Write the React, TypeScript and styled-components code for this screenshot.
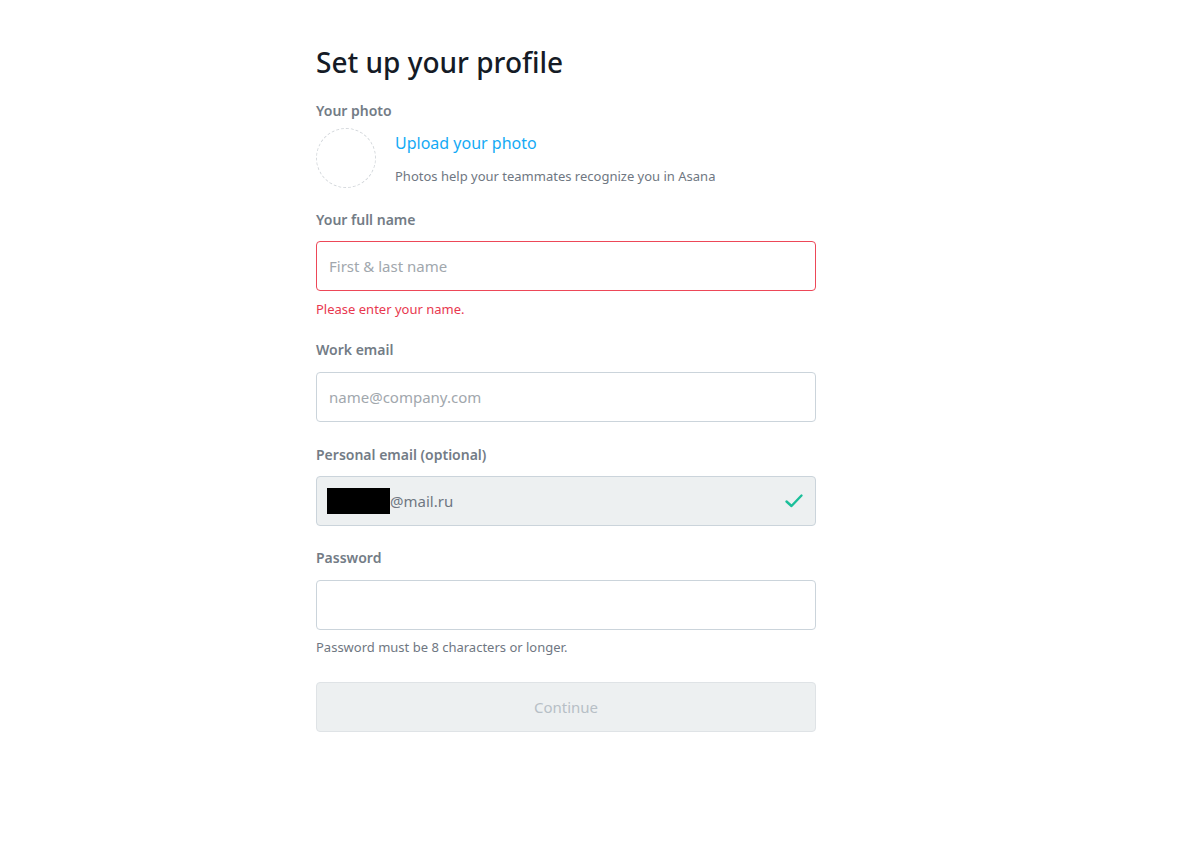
import React from "react";
import styled, { createGlobalStyle } from "styled-components";

const Global = createGlobalStyle`
  html, body { margin: 0; padding: 0; background: #fff; }
  body { font-family: "Noto Sans", "Open Sans", sans-serif; -webkit-font-smoothing: antialiased; }
  * { box-sizing: border-box; }
`;

const Page = styled.div`
  display: flex;
  justify-content: flex-start;
  padding: 40px 0 0 316px;
`;

const Form = styled.div`
  width: 500px;
  display: flex;
  flex-direction: column;
`;

const Title = styled.h1`
  margin: 0 0 17px;
  font-size: 28px;
  font-weight: 500;
  line-height: 44px;
  color: #151b26;
`;

const Label = styled.div<{ gap?: number }>`
  font-size: 14px;
  font-weight: 600;
  line-height: 20px;
  color: #737c86;
  margin-bottom: ${(p) => p.gap ?? 11}px;
`;

const PhotoRow = styled.div`
  display: flex;
  align-items: flex-start;
  gap: 19px;
  margin-bottom: 22px;
`;

const Avatar = styled.div`
  width: 60px;
  height: 60px;
  border-radius: 50%;
  border: 1px dashed #d4d8dc;
  flex: none;
`;

const PhotoText = styled.div`
  display: flex;
  flex-direction: column;
  padding-top: 4px;
`;

const UploadLink = styled.a`
  font-size: 16px;
  line-height: 22px;
  color: #14aaf5;
  cursor: pointer;
  margin-bottom: 13px;
`;

const Hint = styled.div<{ error?: boolean }>`
  font-size: 13px;
  line-height: 18px;
  color: ${(p) => (p.error ? "#e8384f" : "#6f7782")};
`;

const Input = styled.input<{ error?: boolean }>`
  width: 100%;
  height: 50px;
  border-radius: 4px;
  border: 1px solid ${(p) => (p.error ? "#ed4758" : "#cbd4db")};
  background: #fff;
  padding: 0 12px;
  font-family: inherit;
  font-size: 15px;
  color: #6f7782;
  outline: none;
  &::placeholder { color: #a1a7ad; }
`;

const Group = styled.div<{ mb: number }>`
  display: flex;
  flex-direction: column;
  margin-bottom: ${(p) => p.mb}px;
`;

const HintWrap = styled.div<{ mt: number }>`
  margin-top: ${(p) => p.mt}px;
`;

const Redacted = styled.span`
  display: inline-block;
  width: 63px;
  height: 26px;
  background: #000;
`;

const FilledBox = styled.div`
  height: 50px;
  border-radius: 4px;
  border: 1px solid #cbd4db;
  background: #edf0f1;
  display: flex;
  align-items: center;
  padding: 0 11px 0 10px;
  font-size: 15px;
  color: #6f7782;
`;

const EmailText = styled.span`
  flex: 1;
  display: flex;
  align-items: center;
`;

const Check = styled.svg`
  width: 20px;
  height: 20px;
  flex: none;
`;

const Button = styled.button`
  height: 50px;
  width: 100%;
  border-radius: 4px;
  border: 1px solid #dfe3e6;
  background: #edf0f1;
  color: #b7bfc6;
  font-family: inherit;
  font-size: 15px;
  cursor: default;
`;

export default function App() {
  return (
    <>
      <Global />
      <Page>
        <Form>
          <Title>Set up your profile</Title>
          <Label gap={7}>Your photo</Label>
          <PhotoRow>
            <Avatar />
            <PhotoText>
              <UploadLink>Upload your photo</UploadLink>
              <Hint>Photos help your teammates recognize you in Asana</Hint>
            </PhotoText>
          </PhotoRow>

          <Label>Your full name</Label>
          <Group mb={22}>
            <Input error placeholder="First & last name" />
            <HintWrap mt={9}>
              <Hint error>Please enter your name.</Hint>
            </HintWrap>
          </Group>

          <Label gap={12}>Work email</Label>
          <Group mb={23}>
            <Input placeholder="name@company.com" />
          </Group>

          <Label>Personal email (optional)</Label>
          <Group mb={22}>
            <FilledBox>
              <EmailText>
                <Redacted />
                @mail.ru
              </EmailText>
              <Check viewBox="0 0 20 20">
                <path d="M2.5 10.5 L7.5 15 L17.5 4.5" fill="none" stroke="#1bbf9a" strokeWidth="2.4" strokeLinecap="round" strokeLinejoin="round" />
              </Check>
            </FilledBox>
          </Group>

          <Label gap={12}>Password</Label>
          <Group mb={26}>
            <Input type="password" />
            <HintWrap mt={8}>
              <Hint>Password must be 8 characters or longer.</Hint>
            </HintWrap>
          </Group>

          <Button disabled>Continue</Button>
        </Form>
      </Page>
    </>
  );
}
